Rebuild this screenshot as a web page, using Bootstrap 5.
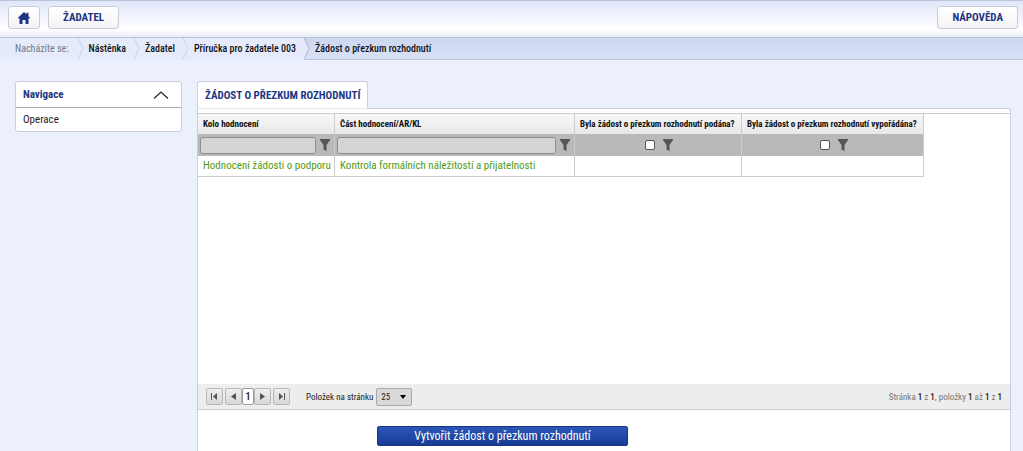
<!DOCTYPE html>
<html lang="cs">
<head>
<meta charset="utf-8">
<meta name="viewport" content="width=device-width, initial-scale=1">
<title>Žádost o přezkum rozhodnutí</title>
<link href="https://cdn.jsdelivr.net/npm/bootstrap@5.3.0/dist/css/bootstrap.min.css" rel="stylesheet">
<style>
body{font-family:"Roboto Condensed","Liberation Sans Narrow","Roboto",sans-serif;font-size:11px;line-height:14px;color:#222;background:#ecf0fd}
a{color:inherit;text-decoration:none}
.topbar{height:38px;padding:5px 5px 0 8px;border-top:1px solid #bcc4da;border-bottom:1px solid #b9c1d8;background:linear-gradient(#e0e6fb,#fff 80%,#e9ecf5)}
.topbar .btn{height:23px;padding:0 14px;border:1px solid #c9ccd6;border-radius:3px;background:linear-gradient(#fff,#f4f4f6);color:#1c3582;font-size:11px;line-height:22px;font-weight:700}
.topbar .home-btn{padding:0 8px}
.trail{height:22px;border-bottom:1px solid #bcc6e2;background:linear-gradient(#ccd6f0,#d9e1f6);font-size:10px}
.trail li{position:relative;padding:0 8px 0 11px;line-height:22px;color:#111;background:#e5ebfb;font-weight:500}
.trail li:first-child{padding:0 9px 0 15px;color:#727988;font-weight:400}
.trail li:last-child{background:none}
.trail li svg{position:absolute;left:100%;top:0;z-index:1}
.page-row{margin-top:21px}
.side-col{width:167px;margin-left:15px}
.side-nav{border:1px solid #c9cfdf;border-radius:3px;background:#fff}
.side-nav button{height:25px;padding:0 12px 0 7px;border:0;background:none;color:#1c3582;font-weight:700}
.side-nav a{height:24px;padding:0 7px;line-height:24px;border-top:1px solid #aaa}
.main-col{margin:0 12px 0 15px}
.tab-head{position:relative;z-index:1;height:28px;padding:0 7px;margin-bottom:-1px;border:1px solid #c9cfdf;border-bottom-color:#e5e5e5;border-radius:3px 3px 0 0;background:#fff;color:#1c3582;font-size:11px;line-height:28px;font-weight:700}
.panel{border:1px solid #c9cfdf;border-bottom:0;border-radius:0 3px 0 0;background:#fff;padding-top:4px}
.data-grid{border-top:1px solid #ccc}
.data-grid table{width:726px;table-layout:fixed;border-collapse:separate;border-spacing:0}
.data-grid th,.data-grid td{border-right:1px solid #ccc;white-space:nowrap}
.data-grid th{height:20px;padding:0 5px;background:linear-gradient(#f8f8f8,#e8e8e8);color:#111;font-size:9px;line-height:20px;font-weight:700}
.filter-row td{height:22px;padding:0 0 0 2px;background:#b9b9b9}
.filter-row input[type=text]{height:17px;min-width:0;padding:0 4px;border:1px solid #8d8d8d;border-radius:3px;background:#d5d5d5}
.filter-row input[type=checkbox]{width:10px;height:10px;margin:0;appearance:none;border:1px solid #555;border-radius:2px;background:#fff}
.filter-row button{padding:0;border:0;background:none;line-height:0}
.value-row td{height:21px;padding:0 5px;border-bottom:1px solid #ccc;color:#509a14;font-size:11px;line-height:20px}
.pager{height:26px;padding:0 8px;border-bottom:1px solid #ccc;background:#ededed;font-size:9px}
.page-btn{width:17px;height:17px;padding:0;border:1px solid #b8b8b8;border-radius:2px;background:linear-gradient(#eee,#d8d8d8);line-height:0}
.page-btn.current{width:12px;background:#fff;border-color:#999;font-size:11px;line-height:15px;color:#222;font-weight:500}
.page-btn.edge-prev{margin-right:2px}
.page-btn.edge-next{margin-left:2px}
.size-box{position:relative;margin-left:3px}
.size-box select{width:36px;height:18px;padding:0 4px;border:1px solid #aaa;border-radius:2px;background:#d9d9d9;appearance:none;color:#222}
.size-box svg{position:absolute;right:6px;top:7px;pointer-events:none}
.summary{color:#777}
.summary b{color:#222;font-weight:500}
.action-row{height:41px;padding:16px 0 0 179px}
.action-row .btn{width:251px;height:20px;padding:0;border:1px solid #163384;border-radius:2px;background:linear-gradient(#2b57b8,#173c94);color:#fff;font-size:12px;line-height:18px}
</style>
</head>
<body class="d-flex flex-column min-vh-100">
<header class="topbar d-flex gap-2">
  <button class="btn home-btn d-flex align-items-center" type="button" aria-label="Domů"><svg width="14" height="12" viewBox="0 0 13 12" fill="#1c3582"><path d="M6.500 0 9 2.300V.8h2v3.400L13 6.200h-2V12H8V8H5v4H2V6.200H0z"/></svg></button>
  <button class="btn" type="button">ŽADATEL</button>
  <button class="btn ms-auto" type="button">NÁPOVĚDA</button>
</header>
<nav class="trail" aria-label="Drobečková navigace">
  <ol class="list-unstyled d-flex m-0">
    <li>Nacházíte se:<svg width="7" height="21" viewBox="0 0 7 21"><path d="M0 0 5 10.500 0 21" fill="#e5ebfb" stroke="#c9d3ee"/></svg></li>
    <li><a href="#">Nástěnka</a><svg width="7" height="21" viewBox="0 0 7 21"><path d="M0 0 5 10.500 0 21" fill="#e5ebfb" stroke="#c9d3ee"/></svg></li>
    <li><a href="#">Žadatel</a><svg width="7" height="21" viewBox="0 0 7 21"><path d="M0 0 5 10.500 0 21" fill="#e5ebfb" stroke="#c9d3ee"/></svg></li>
    <li><a href="#">Příručka pro žadatele 003</a><svg width="7" height="21" viewBox="0 0 7 21"><path d="M0 0 5 10.500 0 21" fill="#e5ebfb" stroke="#adb9da"/></svg></li>
    <li>Žádost o přezkum rozhodnutí</li>
  </ol>
</nav>
<div class="page-row d-flex flex-grow-1">
  <aside class="side-col flex-shrink-0">
    <nav class="side-nav">
      <button class="d-flex w-100 align-items-center justify-content-between" type="button" aria-expanded="true">Navigace<svg width="16" height="8" viewBox="0 0 16 8" fill="none" stroke="#222" stroke-width="1.200"><path d="M1 7.500 8 1l7 6.500"/></svg></button>
      <a class="d-block" href="#">Operace</a>
    </nav>
  </aside>
  <main class="main-col flex-grow-1 d-flex flex-column">
    <h1 class="tab-head align-self-start">ŽÁDOST O PŘEZKUM ROZHODNUTÍ</h1>
    <section class="panel flex-grow-1 d-flex flex-column">
      <div class="data-grid flex-grow-1">
        <table>
          <colgroup><col style="width:137px"><col style="width:240px"><col style="width:167px"><col style="width:182px"></colgroup>
          <thead>
            <tr><th>Kolo hodnocení</th><th>Část hodnocení/AR/KL</th><th>Byla žádost o přezkum rozhodnutí podána?</th><th>Byla žádost o přezkum rozhodnutí vypořádána?</th></tr>
          </thead>
          <tbody>
            <tr class="filter-row">
              <td><div class="d-flex align-items-center pe-1 gap-1"><input class="flex-grow-1" type="text" aria-label="Kolo hodnocení"><button type="button" aria-label="Filtr"><svg width="10" height="12" viewBox="0 0 10 12" fill="#555"><path d="M0 0h10v1L6.500 6v6L3.500 10.500V6L0 1z"/></svg></button></div></td>
              <td><div class="d-flex align-items-center pe-1 gap-1"><input class="flex-grow-1" type="text" aria-label="Část hodnocení"><button type="button" aria-label="Filtr"><svg width="10" height="12" viewBox="0 0 10 12" fill="#555"><path d="M0 0h10v1L6.500 6v6L3.500 10.500V6L0 1z"/></svg></button></div></td>
              <td><div class="d-flex align-items-center justify-content-center gap-2"><input type="checkbox" aria-label="Podána"><button type="button" aria-label="Filtr"><svg width="10" height="12" viewBox="0 0 10 12" fill="#555"><path d="M0 0h10v1L6.500 6v6L3.500 10.500V6L0 1z"/></svg></button></div></td>
              <td><div class="d-flex align-items-center justify-content-center gap-2"><input type="checkbox" aria-label="Vypořádána"><button type="button" aria-label="Filtr"><svg width="10" height="12" viewBox="0 0 10 12" fill="#555"><path d="M0 0h10v1L6.500 6v6L3.500 10.500V6L0 1z"/></svg></button></div></td>
            </tr>
            <tr class="value-row"><td>Hodnocení žádosti o podporu</td><td>Kontrola formálních náležitostí a přijatelnosti</td><td></td><td></td></tr>
          </tbody>
        </table>
      </div>
      <div class="pager d-flex align-items-center">
        <div class="d-flex">
          <button class="page-btn edge-prev" type="button" aria-label="První"><svg width="7" height="7" viewBox="0 0 7 7" fill="#555"><path d="M0 0h1v7H0zM6 0v7L2 3.500z"/></svg></button>
          <button class="page-btn" type="button" aria-label="Předchozí"><svg width="5" height="7" viewBox="0 0 5 7" fill="#555"><path d="M5 0v7L0 3.500z"/></svg></button>
          <button class="page-btn current" type="button">1</button>
          <button class="page-btn" type="button" aria-label="Další"><svg width="5" height="7" viewBox="0 0 5 7" fill="#555"><path d="M0 0v7l5-3.500z"/></svg></button>
          <button class="page-btn edge-next" type="button" aria-label="Poslední"><svg width="7" height="7" viewBox="0 0 7 7" fill="#555"><path d="M6 0h1v7H6zM1 0v7l4-3.500z"/></svg></button>
        </div>
        <label class="ms-3" for="size">Položek na stránku</label>
        <div class="size-box"><select id="size"><option>25</option></select><svg width="6" height="4" viewBox="0 0 6 4"><path d="M0 0h6L3 4z"/></svg></div>
        <div class="summary ms-auto">Stránka <b>1</b> z <b>1</b>, položky <b>1</b> až <b>1</b> z <b>1</b></div>
      </div>
      <div class="action-row"><button class="btn" type="button">Vytvořit žádost o přezkum rozhodnutí</button></div>
    </section>
  </main>
</div>
<script src="https://cdn.jsdelivr.net/npm/bootstrap@5.3.0/dist/js/bootstrap.bundle.min.js"></script>
</body>
</html>
